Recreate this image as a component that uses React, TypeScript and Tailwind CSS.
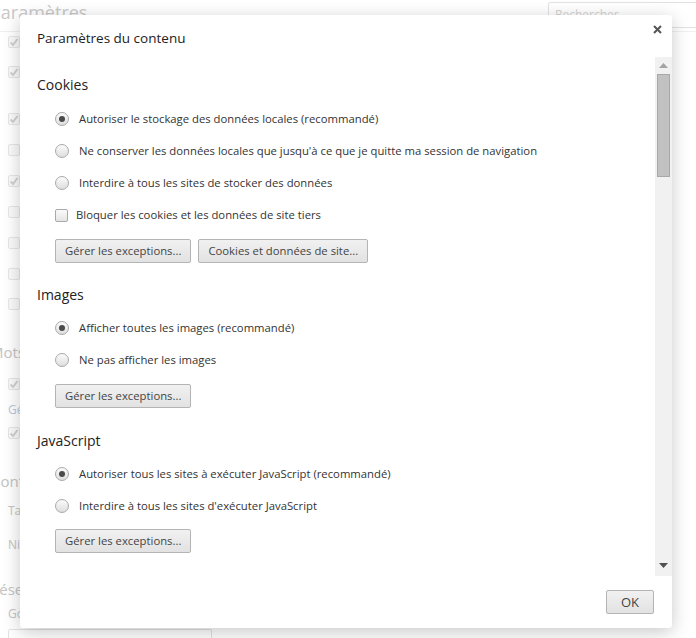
import React from "react";

const font = { fontFamily: '"Open Sans", "Noto Sans", sans-serif' };

function BgCheck({ checked = false }: { checked?: boolean }) {
	return (
		<div className="w-[12px] h-[12px] border border-[#e6e6e6] rounded-[2px] bg-[#fafafa] flex items-center justify-center">
			{checked && (
				<svg width="10" height="10" viewBox="0 0 10 10">
					<path d="M1.5 5.5 L4 8 L8.5 2" stroke="#d0d0d0" strokeWidth="2" fill="none" />
				</svg>
			)}
		</div>
	);
}

function Radio({ checked = false }: { checked?: boolean }) {
	return (
		<div className="w-[14px] h-[14px] rounded-full border border-[#a9a9a9] bg-gradient-to-b from-[#fbfbfb] to-[#dedede] flex items-center justify-center shrink-0">
			{checked && <div className="w-[6px] h-[6px] rounded-full bg-[#4a4a4a]" />}
		</div>
	);
}

function Check() {
	return (
		<div className="w-[13px] h-[13px] rounded-[2px] border border-[#a9a9a9] bg-gradient-to-b from-[#fbfbfb] to-[#e4e4e4] shrink-0" />
	);
}

function Option({ label, checked, box }: { label: string; checked?: boolean; box?: boolean }) {
	return (
		<div className="h-[32px] flex items-center pl-[18px] gap-[10px]">
			{box ? <Check /> : <Radio checked={checked} />}
			<span className={box ? "-ml-[2px]" : ""}>{label}</span>
		</div>
	);
}

function Btn({ children, className = "" }: { children: React.ReactNode; className?: string }) {
	return (
		<button className={`h-[24px] px-[9px] border border-[#b4b4b4] rounded-[2px] bg-gradient-to-b from-[#f1f1f1] to-[#e2e2e2] text-[#444] text-[11.3px] leading-none ${className}`}>
			{children}
		</button>
	);
}

function Heading({ children, className = "" }: { children: React.ReactNode; className?: string }) {
	return <div className={`h-[18px] leading-[18px] text-[14px] text-[#222] ${className}`}>{children}</div>;
}

export default function App() {
	return (
		<div className="relative w-[696px] h-[638px] overflow-hidden bg-white text-[#c4c4c4]" style={font}>
			{/* faded settings page behind */}
			<div className="flex items-start justify-between h-[32px] border-b border-[#f0f0f0]">
				<div className="text-[18px] leading-[24px] -ml-[10px] text-[#c9c9c9]">Paramètres</div>
				<div className="mt-[2px] -mr-[12px] w-[160px] h-[26px] border border-[#e2e2e2] rounded-[2px] px-[6px] text-[12px] leading-[24px] text-[#d2d2d2]">
					Rechercher
				</div>
			</div>
			<div className="flex flex-col pl-[8px]">
				<div className="mt-[4px]"><BgCheck checked /></div>
				<div className="mt-[18px]"><BgCheck checked /></div>
				<div className="mt-[35px]"><BgCheck checked /></div>
				<div className="mt-[19px]"><BgCheck /></div>
				<div className="mt-[19px]"><BgCheck checked /></div>
				<div className="mt-[19px]"><BgCheck /></div>
				<div className="mt-[19px]"><BgCheck /></div>
				<div className="mt-[19px]"><BgCheck /></div>
				<div className="mt-[18px]"><BgCheck /></div>
				<div className="mt-[32px] -ml-[18px] text-[15px] leading-[20px]">Mots de passe</div>
				<div className="mt-[16px]"><BgCheck checked /></div>
				<div className="mt-[12px] text-[12px] leading-[16px] text-[#b8c6e0]">Gérer</div>
				<div className="mt-[9px]"><BgCheck checked /></div>
				<div className="mt-[32px] -ml-[17px] text-[15px] leading-[20px]">Contenu Web</div>
				<div className="mt-[12px] text-[12px] leading-[16px]">Taille de police</div>
				<div className="mt-[18px] text-[12px] leading-[16px]">Niveau de zoom</div>
				<div className="mt-[26px] -ml-[18px] text-[15px] leading-[20px]">Réseau</div>
				<div className="mt-[7px] text-[12px] leading-[16px]">Google Chrome</div>
				<div className="mt-[7px] w-[204px] h-[24px] border border-[#e2e2e2] rounded-[2px]" />
			</div>

			{/* dialog */}
			<div className="absolute left-[20px] top-[15px] w-[652px] h-[613px] bg-white rounded-[3px] shadow-[0_4px_18px_rgba(0,0,0,0.22)] flex flex-col text-[#333] text-[11.3px]">
				<div className="h-[42px] flex items-start justify-between">
					<div className="pl-[17px] pt-[13px] text-[13.5px] leading-[20px] text-[#222]">Paramètres du contenu</div>
					<svg className="mt-[10px] mr-[10px]" width="9" height="9" viewBox="0 0 9 9">
						<path d="M1 1 L8 8 M8 1 L1 8" stroke="#555" strokeWidth="2" />
					</svg>
				</div>
				<div className="h-[519px] flex">
					<div className="flex-1 overflow-hidden pt-[19px] pl-[17px]">
						<Heading>Cookies</Heading>
						<div className="mt-[9px]">
							<Option label="Autoriser le stockage des données locales (recommandé)" checked />
							<Option label="Ne conserver les données locales que jusqu'à ce que je quitte ma session de navigation" />
							<Option label="Interdire à tous les sites de stocker des données" />
							<Option label="Bloquer les cookies et les données de site tiers" box />
						</div>
						<div className="mt-[8px] pl-[18px] flex gap-[7px]">
							<Btn>Gérer les exceptions...</Btn>
							<Btn>Cookies et données de site...</Btn>
						</div>
						<Heading className="mt-[23px]">Images</Heading>
						<div className="mt-[8px]">
							<Option label="Afficher toutes les images (recommandé)" checked />
							<Option label="Ne pas afficher les images" />
						</div>
						<div className="mt-[8px] pl-[18px] flex">
							<Btn>Gérer les exceptions...</Btn>
						</div>
						<Heading className="mt-[24px]">JavaScript</Heading>
						<div className="mt-[8px]">
							<Option label="Autoriser tous les sites à exécuter JavaScript (recommandé)" checked />
							<Option label="Interdire à tous les sites d'exécuter JavaScript" />
						</div>
						<div className="mt-[7px] pl-[18px] flex">
							<Btn>Gérer les exceptions...</Btn>
						</div>
					</div>
					<div className="w-[17px] bg-[#f1f1f1] flex flex-col items-center">
						<svg className="mt-[6px]" width="9" height="5" viewBox="0 0 9 5">
							<path d="M0 5 L4.5 0 L9 5 Z" fill="#a3a3a3" />
						</svg>
						<div className="mt-[6px] w-[13px] h-[103px] bg-[#c1c1c1] border border-[#a8a8a8]" />
						<div className="flex-1" />
						<svg className="mb-[8px]" width="9" height="5" viewBox="0 0 9 5">
							<path d="M0 0 L9 0 L4.5 5 Z" fill="#505050" />
						</svg>
					</div>
				</div>
				<div className="flex-1 flex items-start justify-end pr-[18px] pt-[14px]">
					<Btn className="w-[48px] h-[24px] px-0 text-[13px]">OK</Btn>
				</div>
			</div>
		</div>
	);
}
